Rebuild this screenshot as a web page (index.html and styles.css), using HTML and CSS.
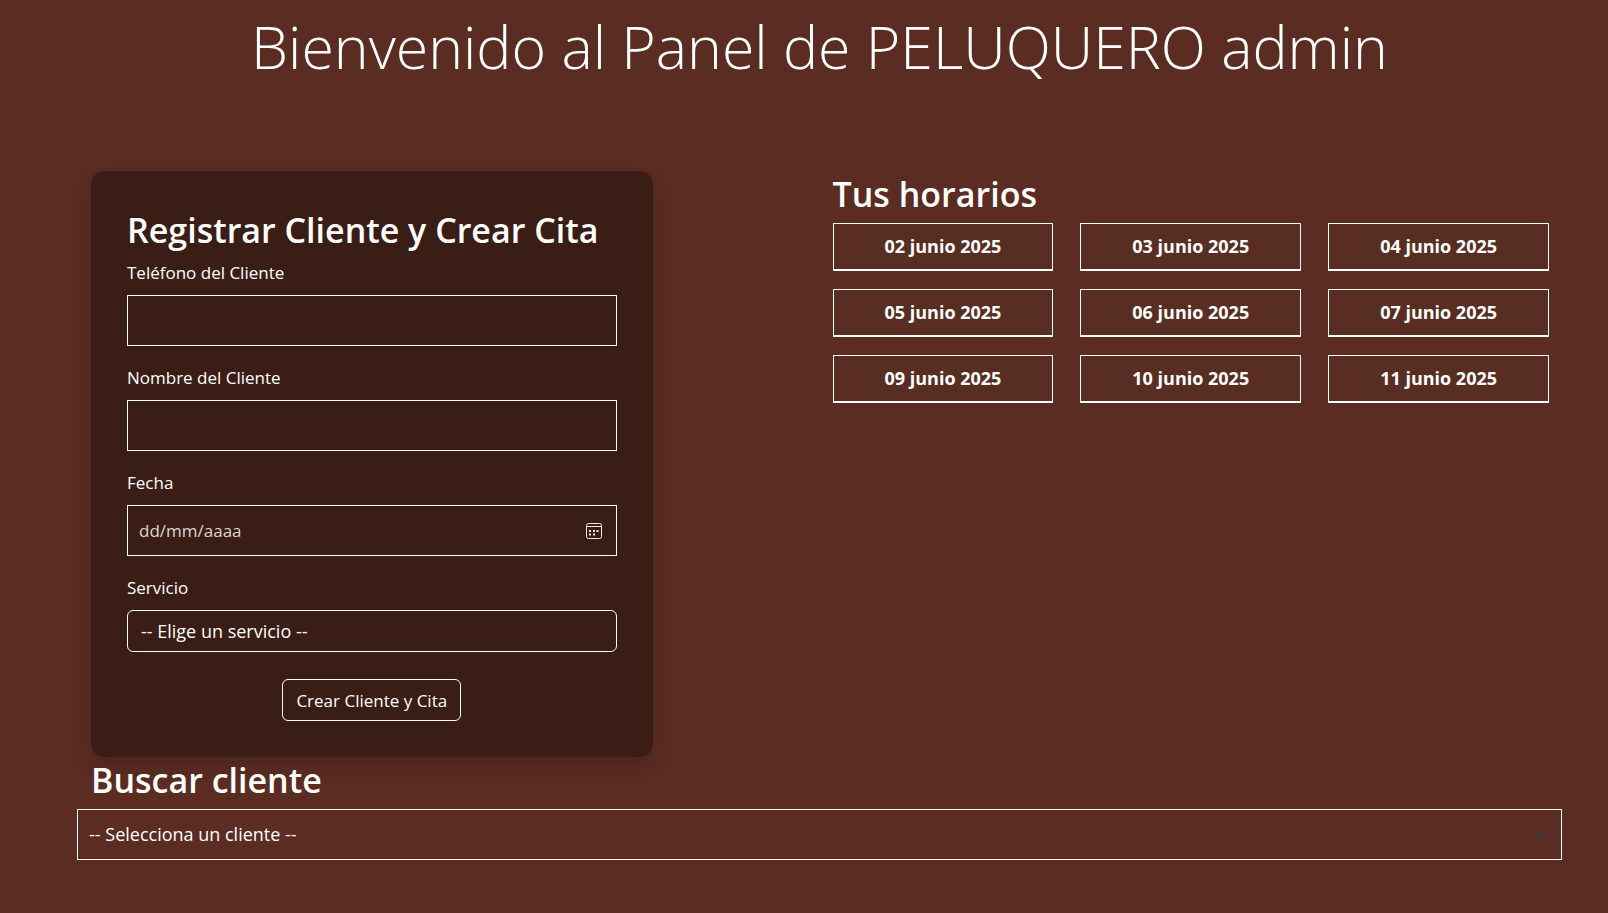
FILE: index.html
```html
<!DOCTYPE html>
<html lang="es">
<head>
<meta charset="utf-8">
<meta name="viewport" content="width=device-width, initial-scale=1">
<title>Panel de peluquero</title>
<link rel="stylesheet" href="styles.css">
</head>
<body>
<main class="panel">
  <h1 class="panel-title">Bienvenido al Panel de PELUQUERO admin</h1>

  <div class="columns">
    <form class="card">
      <h2 class="heading">Registrar Cliente y Crear Cita</h2>
      <div class="field">
        <label class="label" for="telefono">Teléfono del Cliente</label>
        <input class="input" type="text" id="telefono">
      </div>
      <div class="field">
        <label class="label" for="nombre">Nombre del Cliente</label>
        <input class="input" type="text" id="nombre">
      </div>
      <div class="field">
        <label class="label" for="fecha">Fecha</label>
        <div class="control">
          <input class="input" type="text" id="fecha" placeholder="dd/mm/aaaa">
          <button class="picker" type="button" aria-label="Abrir calendario">
            <svg width="16" height="16" viewBox="0 0 16 16" fill="none" stroke="currentColor">
              <rect x="0.5" y="0.5" width="15" height="15" rx="2"/>
              <path d="M1 3.500h14"/>
              <path d="M3 8h2M7 8h2M10.500 8h2M3 11.500h2M7 11.500h2" stroke-width="2"/>
            </svg>
          </button>
        </div>
      </div>
      <div class="field">
        <label class="label" for="servicio">Servicio</label>
        <select class="select select-service" id="servicio">
          <option>-- Elige un servicio --</option>
        </select>
      </div>
      <button class="submit" type="submit">Crear Cliente y Cita</button>
    </form>

    <section class="schedule">
      <h2 class="heading">Tus horarios</h2>
      <div class="days">
        <button class="day" type="button">02 junio 2025</button>
        <button class="day" type="button">03 junio 2025</button>
        <button class="day" type="button">04 junio 2025</button>
        <button class="day" type="button">05 junio 2025</button>
        <button class="day" type="button">06 junio 2025</button>
        <button class="day" type="button">07 junio 2025</button>
        <button class="day" type="button">09 junio 2025</button>
        <button class="day" type="button">10 junio 2025</button>
        <button class="day" type="button">11 junio 2025</button>
      </div>
    </section>
  </div>

  <section class="search">
    <h2 class="heading search-heading"><label for="cliente">Buscar cliente</label></h2>
    <div class="control">
      <select class="input select" id="cliente">
        <option>-- Selecciona un cliente --</option>
      </select>
      <svg class="chevron" width="14" height="14" viewBox="0 0 16 16" fill="none" stroke="currentColor" stroke-width="2" stroke-linecap="round" stroke-linejoin="round"><path d="m2 5 6 6 6-6"/></svg>
    </div>
  </section>
</main>
</body>
</html>
```
FILE: styles.css
```css
*,
*::before,
*::after {
  box-sizing: border-box;
}

body {
  margin: 0;
  min-height: 100vh;
  background: #5a2c22;
  color: #fff;
  font-family: "Open Sans", "Noto Sans", sans-serif;
  font-size: 17px;
  line-height: 27px;
}

.panel {
  padding: 8px 46px 52px 77px;
}

.panel-title {
  margin: 0 0 86px;
  font-size: 59px;
  font-weight: 300;
  line-height: 77px;
  text-align: center;
}

.columns {
  display: grid;
  grid-template-columns: minmax(0, 562fr) minmax(0, 717fr);
  align-items: start;
  gap: 180px;
  padding: 0 13px 0 14px;
}

.card {
  display: flex;
  flex-direction: column;
  padding: 36px;
  border-radius: 14px;
  background: #3a1d15;
  box-shadow: 0 9px 18px rgba(0, 0, 0, 0.15);
}

.heading {
  margin: 0 0 5px;
  font-size: 34px;
  font-weight: 600;
  line-height: 47px;
}

.field {
  display: flex;
  flex-direction: column;
  gap: 9px;
  margin-bottom: 18px;
}

.field:last-of-type {
  margin-bottom: 27px;
}

.control {
  position: relative;
  display: flex;
}

.input,
.select {
  width: 100%;
  margin: 0;
  border: 1px solid #fff;
  border-radius: 0;
  background: transparent;
  color: #fff;
  font: inherit;
  appearance: none;
}

.input {
  height: 51px;
  padding: 0 11px;
}

.input::placeholder {
  color: #ddd5d3;
  opacity: 1;
}

.select {
  font-size: 18px;
}

.select-service {
  height: 42px;
  padding: 0 13px;
  border-radius: 6px;
}

.picker {
  position: absolute;
  top: 0;
  right: 0;
  display: flex;
  align-items: center;
  height: 100%;
  padding: 0 15px;
  border: 0;
  background: none;
  color: #eee8e6;
}

.submit {
  align-self: center;
  height: 42px;
  padding: 0 13px;
  border: 1px solid #fff;
  border-radius: 6px;
  background: transparent;
  color: #fff;
  font: inherit;
}

.days {
  display: grid;
  grid-template-columns: repeat(3, minmax(0, 1fr));
  gap: 18px 27px;
}

.day {
  height: 48px;
  padding: 0 9px;
  border: 1px solid #fff;
  border-bottom-width: 2px;
  background: #582d22;
  color: #fff;
  font: inherit;
  font-size: 18px;
  font-weight: 700;
}

.search-heading {
  padding: 0 14px;
}

.chevron {
  position: absolute;
  top: 19px;
  right: 16px;
  color: #343a40;
  pointer-events: none;
}
```
